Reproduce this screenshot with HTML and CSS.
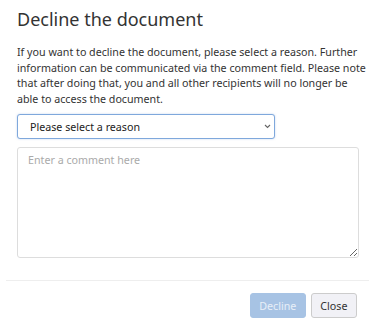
FILE: index.html
```html
<!DOCTYPE html>
<html>
<head>
  <title>Decline the document</title>
  <link rel="stylesheet" href="styles.css">
</head>
<body>
  <div class="modal">
    <div class="modal-body">
      <h2 class="modal-title">Decline the document</h2>
      <p class="modal-text">If you want to decline the document, please select a reason. Further information can be communicated via the comment field. Please note that after doing that, you and all other recipients will no longer be able to access the document.</p>

      <div class="select-wrap">
        <select class="reason-select">
          <option>Please select a reason</option>
        </select>
        <svg class="select-arrow" width="7" height="5" viewBox="0 0 7 5">
          <path d="M1 1l2.5 2.5L6 1" fill="none" stroke="#666" stroke-width="1.1"/>
        </svg>
      </div>

      <textarea class="comment" placeholder="Enter a comment here"></textarea>
    </div>

    <div class="modal-footer">
      <button class="btn btn-primary" disabled>Decline</button>
      <button class="btn btn-secondary">Close</button>
    </div>
  </div>
</body>
</html>
```

FILE: styles.css
```css
:root {
  --text: #333;
  --border: #ddd;
  --focus: #7fa8dc;
  --primary: #a7c3e4;
}

body {
  margin: 0;
  font-family: 'Noto Sans', sans-serif;
  color: var(--text);
  background: #fff;
}

.modal {
  padding-left: 6px;
}

.modal-body {
  padding: 7px 0 22px 11px;
}

.modal-title {
  margin: 0 0 14px;
  font-size: 18px;
  line-height: 24px;
  font-weight: normal;
  color: #333;
}

.modal-text {
  margin: 0 0 7px;
  font-size: 10.7px;
  line-height: 15.5px;
}

.select-wrap {
  position: relative;
  width: 258px;
}

.reason-select {
  display: block;
  box-sizing: border-box;
  width: 100%;
  height: 25px;
  padding: 0 20px 0 12px;
  font-family: inherit;
  font-size: 10.7px;
  color: #222;
  background: #fff;
  border: 1px solid var(--focus);
  border-radius: 3px;
  box-shadow: 0 0 2px rgba(127, 168, 220, 0.5);
  outline: none;
  appearance: none;
  -webkit-appearance: none;
}

.select-arrow {
  position: absolute;
  right: 4px;
  top: 10px;
  pointer-events: none;
}

.comment {
  display: block;
  box-sizing: border-box;
  width: 342px;
  height: 111px;
  margin-top: 8px;
  padding: 5px 10px;
  font-family: inherit;
  font-size: 10.7px;
  border: 1px solid var(--border);
  border-radius: 3px;
  resize: vertical;
}

.comment::placeholder {
  color: #aaa;
}

.modal-footer {
  display: flex;
  justify-content: flex-end;
  gap: 5px;
  padding: 12px 12px 10px;
  border-top: 1px solid #eee;
}

.btn {
  height: 25px;
  padding: 0 8.5px;
  font-family: inherit;
  font-size: 10.7px;
  border-radius: 3px;
}

.btn-primary {
  background: var(--primary);
  border: 1px solid var(--primary);
  color: #e8eff8;
}

.btn-secondary {
  background: #f1f1f6;
  border: 1px solid #ccc;
  color: #333;
}
```
